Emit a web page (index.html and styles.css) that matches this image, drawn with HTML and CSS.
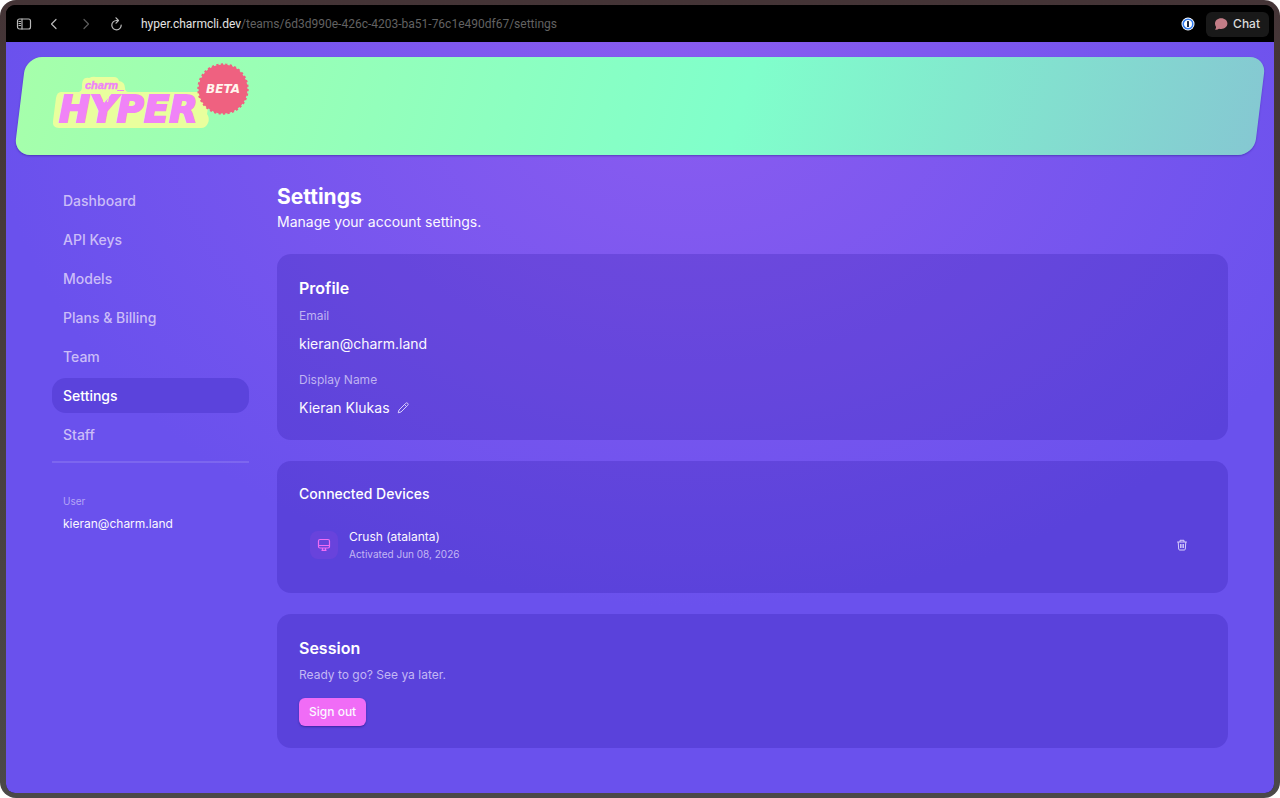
FILE: index.html
```html
<!DOCTYPE html>
<html lang="en">
<head>
<meta charset="utf-8">
<meta name="viewport" content="width=device-width, initial-scale=1">
<title>Settings - Charm Hyper</title>
<link rel="stylesheet" href="styles.css">
</head>
<body>
<div class="frame">
  <div class="window">
    <header class="toolbar">
      <button class="tool" aria-label="Toggle sidebar"><svg width="16" height="16" viewBox="0 0 16 16"><rect x="1.5" y="3" width="13" height="10" rx="2"/><path d="M6 3v10M3 5.5h1.5M3 7.5h1.5M3 9.5h1.5"/></svg></button>
      <button class="tool" aria-label="Back"><svg width="16" height="16" viewBox="0 0 16 16"><path d="M9 3.5 4.5 8l4.5 4.5"/></svg></button>
      <button class="tool tool-off" aria-label="Forward"><svg width="16" height="16" viewBox="0 0 16 16"><path d="M6 3.5 10.500 8 6 12.500"/></svg></button>
      <button class="tool" aria-label="Reload"><svg width="16" height="16" viewBox="0 0 16 16"><path d="M12.200 9A4.700 4.700 0 1 1 7.500 4.500h1.500M7 1.800 9.500 4.500 7 7.100"/></svg></button>
      <div class="address">hyper.charmcli.dev<span class="path">/teams/6d3d990e-426c-4203-ba51-76c1e490df67/settings</span></div>
      <button class="extension" aria-label="Password manager"><svg width="14" height="14" viewBox="0 0 14 14"><circle cx="7" cy="7" r="6.500" fill="#fff"/><circle cx="7" cy="7" r="4.800" fill="#fff" stroke="#2f7cf0" stroke-width="1.600"/><rect x="6" y="4" width="2" height="6" rx=".6" fill="#1b2a44"/></svg></button>
      <button class="chat"><svg width="14" height="14" viewBox="0 0 14 14"><path fill="#c27c86" d="M7.200 1.200c3.600 0 6.200 2.300 6.200 5.400s-2.600 5.400-6.200 5.400c-.8 0-1.500-.1-2.200-.3-1 .7-2.400 1.100-4 .9.800-.8 1.200-1.600 1.100-2.500A5 5 0 0 1 1 6.600c0-3.100 2.600-5.400 6.200-5.400z"/></svg>Chat</button>
    </header>
    <div class="page">
      <div class="banner">
        <a class="logo" href="#" aria-label="Charm Hyper beta">
          <svg width="200" height="70" viewBox="0 0 200 70">
            <path fill="#e9ff9d" d="M9 30H27Q30 29 30 25C30 18 32 15 37 16Q41 14 44 15H62Q66 15 67 19Q73 20 73 26 73 30 77 30H147Q158 30 157 40L155 52Q158 56 156 61 154 66 149 66H7Q0 66 1 59L4 36Q5 30 9 30Z"/>
            <text class="logo-charm" x="33" y="27">charm_</text>
            <text class="logo-hyper" x="7" y="60">HYPER</text>
            <path class="logo-eyes" d="M52.500 35 51.500 40M56.500 35 55.500 40"/>
            <circle cx="171" cy="27" r="24.500" fill="#ef6180"/>
            <circle cx="171" cy="27" r="24.500" fill="none" stroke="#ef6180" stroke-width="2.400" pathLength="68" stroke-dasharray="1 1"/>
            <text class="logo-beta" x="171" y="31">BETA</text>
          </svg>
        </a>
      </div>
      <div class="columns">
        <aside class="sidebar">
          <nav class="nav">
            <a href="#">Dashboard</a>
            <a href="#">API Keys</a>
            <a href="#">Models</a>
            <a href="#">Plans &amp; Billing</a>
            <a href="#">Team</a>
            <a href="#" class="active" aria-current="page">Settings</a>
            <a href="#">Staff</a>
          </nav>
          <div class="user">
            <div class="user-label">User</div>
            <div class="user-email">kieran@charm.land</div>
          </div>
        </aside>
        <main class="main">
          <div>
            <h1>Settings</h1>
            <p class="lead">Manage your account settings.</p>
          </div>
          <section class="card">
            <h2>Profile</h2>
            <dl>
              <dt>Email</dt>
              <dd>kieran@charm.land</dd>
              <dt>Display Name</dt>
              <dd>Kieran Klukas <button class="icon-button" aria-label="Edit display name"><svg width="12" height="12" viewBox="0 0 12 12"><path d="M1.200 10.800 2 8 8.700 1.300a1.300 1.300 0 0 1 2 2L4 10zM7.500 2.500l2 2"/></svg></button></dd>
            </dl>
          </section>
          <section class="card">
            <h3>Connected Devices</h3>
            <div class="device">
              <span class="device-icon"><svg width="14" height="14" viewBox="0 0 14 14"><rect x="1.500" y="1.500" width="11" height="8.500" rx="1.500"/><path d="M1.500 7.500h11M5.500 10v2M8.500 10v2M4.500 12.300h5"/></svg></span>
              <div class="device-text">
                <div class="device-name">Crush (atalanta)</div>
                <div class="device-date">Activated Jun 08, 2026</div>
              </div>
              <button class="icon-button trash" aria-label="Remove device"><svg width="12" height="12" viewBox="0 0 12 12"><path d="M1.200 3h9.600M4 3V1.300h4V3M2.200 3l.5 7q.1 1 1 1h4.600q.9 0 1-1l.5-7M4.600 5v4M6 5v4M7.400 5v4"/></svg></button>
            </div>
          </section>
          <section class="card">
            <h2>Session</h2>
            <p class="note">Ready to go? See ya later.</p>
            <button class="sign-out">Sign out</button>
          </section>
        </main>
      </div>
    </div>
  </div>
</div>
</body>
</html>
```
FILE: styles.css
```css
* { box-sizing: border-box; }
body {
  margin: 0;
  background: #fff;
  font-family: Inter, "Liberation Sans", sans-serif;
  font-size: 14px;
  line-height: 20px;
  color: #fbf8ff;
}
h1, h2, h3, p, dl, dd { margin: 0; }
a { color: inherit; text-decoration: none; }
button {
  margin: 0;
  padding: 0;
  border: 0;
  background: none;
  color: inherit;
  font: inherit;
}
svg { display: block; fill: none; stroke: none; }

.frame {
  display: flex;
  min-height: 100vh;
  padding: 5px 6px;
  border-radius: 16px;
  background: linear-gradient(#443436, #4b4948);
}
.window {
  flex: 1;
  display: flex;
  flex-direction: column;
  overflow: hidden;
  border-radius: 9px;
  background: #000;
}

.toolbar {
  display: flex;
  align-items: center;
  gap: 15px;
  height: 37px;
  padding: 1px 5px 0 10px;
  background: #000;
}
.tool svg { stroke: #b9b9b9; stroke-width: 1.2; stroke-linecap: round; stroke-linejoin: round; }
.tool-off svg { stroke: #5c5c5c; }
.address {
  flex: 1;
  padding-left: 1px;
  font-family: Roboto, "Liberation Sans", sans-serif;
  font-size: 12px;
  color: #e4e4e4;
}
.path { color: #626262; }
.chat {
  display: flex;
  align-items: center;
  gap: 5px;
  height: 25px;
  padding: 0 9px 0 8px;
  border-radius: 6px;
  background: #191919;
  color: #dadada;
  font-size: 12px;
  font-weight: 500;
}
.extension { margin-right: -4px; }

.page {
  flex: 1;
  padding: 15px 14px 44px;
  background: radial-gradient(ellipse 700px 520px at 54% 6%, #8a5cf0, #6a51ed);
}
.banner {
  position: relative;
  z-index: 0;
  min-height: 98px;
  padding: 5px 32px;
}
.banner::before {
  content: "";
  position: absolute;
  inset: 0;
  z-index: -1;
  border-radius: 16px;
  transform: skewX(-7deg);
  background: linear-gradient(100deg, #a6ffab, #80ffcb 58%, #85c8d2);
  box-shadow: 0 1px 2px rgba(30, 15, 120, .4);
}
.logo { display: inline-block; }
.logo text { font-style: italic; font-weight: 700; }
.logo .logo-charm {
  font-family: "Liberation Sans", sans-serif;
  font-size: 11px;
  fill: #f083f7;
  stroke: #f083f7;
  stroke-width: .4;
}
.logo .logo-hyper {
  font-family: "DejaVu Sans", sans-serif;
  font-size: 37px;
  fill: #f083f7;
  stroke: #f083f7;
  stroke-width: 2;
}
.logo-eyes { stroke: #e9ff9d; stroke-width: 1; }
.logo .logo-beta { font-family: "DejaVu Sans", sans-serif; font-size: 12px; fill: #fff6ee; text-anchor: middle; }

.columns {
  display: grid;
  grid-template-columns: 197px 1fr;
  gap: 28px;
  padding: 28px 32px 0;
}
.nav {
  display: flex;
  flex-direction: column;
  gap: 4px;
  padding-bottom: 9px;
  border-bottom: 2px solid rgba(255, 255, 255, .12);
}
.nav a {
  padding: 0 11px;
  border-radius: 14px;
  line-height: 35px;
  font-weight: 500;
  color: #cbbdf8;
}
.nav .active { background: #5b43dc; color: #fff; }
.user { padding: 27px 11px; }
.user-label { font-size: 10px; line-height: 22px; color: #b5a6f7; }
.user-email { font-size: 12px; line-height: 24px; }

.main { display: flex; flex-direction: column; gap: 21px; }
h1 { font-size: 21px; line-height: 28px; font-weight: 700; color: #fff; }
.lead { font-size: 14px; line-height: 22px; }
.card {
  padding: 22px;
  border-radius: 14px;
  background: rgba(30, 10, 150, .2);
}
h2 { font-size: 16px; line-height: 24px; font-weight: 600; color: #fff; }
h3 { font-size: 14px; line-height: 22px; font-weight: 500; color: #fff; }
dt { margin-top: 16px; font-size: 12px; color: #bfb2f2; }
dt:first-child { margin-top: 6px; }
dd { display: flex; align-items: center; gap: 7px; margin-top: 8px; }
.icon-button svg { stroke: #d8cffb; stroke-width: 1; stroke-linejoin: round; }

.device {
  display: flex;
  align-items: center;
  gap: 11px;
  margin-top: 14px;
  padding: 9px 10px 9px 11px;
}
.device-icon {
  display: grid;
  place-items: center;
  width: 28px;
  height: 28px;
  border-radius: 8px;
  background: #6843dc;
}
.device-icon svg { stroke: #ef6cf5; stroke-width: 1.2; }
.device-text { flex: 1; }
.device-name { font-size: 12px; line-height: 18px; }
.device-date { font-size: 10px; line-height: 16px; color: #c3b7f4; }
.trash { display: grid; place-items: center; width: 28px; height: 28px; }

.note { margin-top: 5px; font-size: 12px; color: #c3b7f4; }
.sign-out {
  height: 28px;
  margin-top: 13px;
  padding: 0 10px;
  border-radius: 6px;
  background: #f06cf6;
  box-shadow: 0 1px 2px rgba(30, 10, 110, .5);
  font-size: 12px;
  font-weight: 500;
}
```
